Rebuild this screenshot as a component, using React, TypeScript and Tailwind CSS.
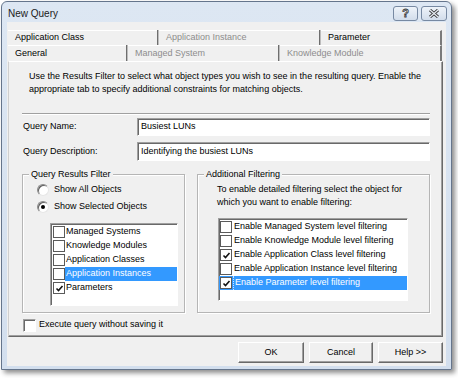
import React from 'react'

const font = { fontFamily: '"Liberation Sans", Arial, sans-serif' }

function ListCheck({ checked }: { checked?: boolean }) {
  return (
    <span className="flex h-[12px] w-[12px] shrink-0 items-center justify-center border border-[#5a5a5a] bg-white">
      {checked && (
        <svg width="9" height="9" viewBox="0 0 9 9">
          <path d="M1.5 4.5 L3.5 6.5 L7.5 2" stroke="#111" strokeWidth="1.6" fill="none" />
        </svg>
      )}
    </span>
  )
}

function Radio({ checked }: { checked?: boolean }) {
  return (
    <span className="flex h-[12px] w-[12px] items-center justify-center rounded-full border border-t-[#8a8a8a] border-l-[#8a8a8a] border-r-[#e6e6e6] border-b-[#e6e6e6] bg-white shadow-[inset_1px_1px_0_#5e5e5e]">
      {checked && <span className="h-[4px] w-[4px] rounded-full bg-black" />}
    </span>
  )
}

function Tab({ label, w, dim, last }: { label: string; w: string; dim?: boolean; last?: boolean }) {
  return (
    <div
      className={`${w} flex h-full items-center border-t border-white pl-[7px] ${
        last ? 'border-r-2 border-r-[#7a7a7a]' : ''
      } ${dim ? 'text-[#8d8d8d]' : 'text-black'}`}
    >
      {label}
    </div>
  )
}

function Sep() {
  return <div className="h-full w-[2px] shrink-0 border-l border-[#6e6e6e] bg-[#bdbdbd]" />
}

function Button({ label, w }: { label: string; w: string }) {
  return (
    <div className={`${w} flex h-[21px] items-center justify-center border border-t-white border-l-white border-r-[#696969] border-b-[#696969] bg-[#f0f0f0] shadow-[inset_-1px_-1px_0_#a0a0a0]`}>
      {label}
    </div>
  )
}

export default function App() {
  return (
    <div className="h-[378px] w-[458px] bg-white pl-[1px] pt-[1px] text-[9px] text-black" style={font}>
      <div className="flex h-[369px] w-[451px] flex-col rounded-t-[6px] border border-[#65758c] bg-gradient-to-b from-[#dde7f3] to-[#d3dfee] shadow-[3px_3px_5px_rgba(0,0,0,0.45)]">
        {/* title bar */}
        <div className="flex h-[20px] items-center justify-between pl-[6px] pr-[4px]">
          <span className="pt-[2px] text-[10px] text-[#1b1b1b]">New Query</span>
          <div className="flex gap-[3px] pt-[3px]">
            <div className="flex h-[15px] w-[25px] items-center justify-center rounded-[3px] border border-[#7789a2] bg-gradient-to-b from-[#eef3f9] to-[#d2ddeb]">
              <span className="text-[11px] font-bold text-transparent [-webkit-text-stroke:0.8px_#3a3a3a]">?</span>
            </div>
            <div className="flex h-[15px] w-[26px] items-center justify-center rounded-[3px] border border-[#7789a2] bg-gradient-to-b from-[#eef3f9] to-[#d2ddeb]">
              <svg width="12" height="9" viewBox="0 0 12 9">
                <path d="M2 1 L10 8 M10 1 L2 8" stroke="#3a3a3a" strokeWidth="3" />
                <path d="M2 1 L10 8 M10 1 L2 8" stroke="#e9eef5" strokeWidth="1.2" />
              </svg>
            </div>
          </div>
        </div>

        {/* client */}
        <div className="mx-[5px] flex h-[344px] flex-col bg-[#f0f0f0] pl-[1px] pt-[8px]">
          {/* tab rows */}
          <div className="flex h-[15px] w-[434px]">
            <Tab label="Application Class" w="w-[149px]" />
            <Sep />
            <Tab label="Application Instance" w="w-[160px]" dim />
            <Sep />
            <Tab label="Parameter" w="flex-1" last />
          </div>
          <div className="flex h-[16px] w-[434px]">
            <Tab label="General" w="w-[118px]" />
            <Sep />
            <Tab label="Managed System" w="w-[150px]" dim />
            <Sep />
            <Tab label="Knowledge Module" w="flex-1" dim last />
          </div>

          {/* panel */}
          <div className="flex h-[276px] w-[435px] flex-col border border-t-white border-l-[#cfcfcf] border-r-[#696969] border-b-[#696969] shadow-[inset_-1px_-1px_0_#a0a0a0]">
            <div className="pl-[20px] pt-[8px] leading-[13px]">
              <div>Use the Results Filter to select what object types you wish to see in the resulting query. Enable the</div>
              <div>appropriate tab to specify additional constraints for matching objects.</div>
            </div>
            <div className="ml-[13px] mt-[17px] h-[2px] w-[408px] border-t border-[#a0a0a0] bg-white" />

            <div className="ml-[14px] mt-[3px] flex h-[18px] w-[407px] items-center">
              <span className="w-[114px]">Query Name:</span>
              <div className="flex h-full flex-1 items-center border border-t-[#a0a0a0] border-l-[#a0a0a0] border-r-white border-b-white bg-white pl-[3px] shadow-[inset_1px_1px_0_#696969]">
                Busiest LUNs
              </div>
            </div>
            <div className="ml-[14px] mt-[6px] flex h-[19px] w-[407px] items-center">
              <span className="w-[114px]">Query Description:</span>
              <div className="flex h-full flex-1 items-center border border-t-[#a0a0a0] border-l-[#a0a0a0] border-r-white border-b-white bg-white pl-[3px] shadow-[inset_1px_1px_0_#696969]">
                Identifying the busiest LUNs
              </div>
            </div>

            {/* groups */}
            <div className="ml-[13px] mt-[13px] flex h-[139px] gap-[12px]">
              <div className="relative h-full w-[163px] border border-[#b5b5b5] shadow-[inset_1px_1px_0_white,1px_1px_0_white]">
                <span className="absolute -top-[7px] left-[6px] bg-[#f0f0f0] px-[2px] leading-[12px]">Query Results Filter</span>
                <div className="ml-[14px] mt-[8px] flex h-[14px] items-center gap-[5px]">
                  <Radio />
                  <span>Show All Objects</span>
                </div>
                <div className="ml-[14px] mt-[3px] flex h-[14px] items-center gap-[5px]">
                  <Radio checked />
                  <span>Show Selected Objects</span>
                </div>
                <div className="ml-[27px] mt-[9px] h-[83px] w-[128px] border border-t-[#a0a0a0] border-l-[#a0a0a0] border-r-white border-b-white bg-white pl-[2px] pt-[1px] shadow-[inset_1px_1px_0_#696969]">
                  {[
                    ['Managed Systems', false, false],
                    ['Knowledge Modules', false, false],
                    ['Application Classes', false, false],
                    ['Application Instances', false, true],
                    ['Parameters', true, false],
                  ].map(([t, c, s]) => (
                    <div key={t as string} className="flex h-[14px] items-center">
                      <ListCheck checked={c as boolean} />
                      <span className={`flex h-full flex-1 items-center pl-[1px] ${s ? 'bg-[#3399ff] text-white' : ''}`}>{t as string}</span>
                    </div>
                  ))}
                </div>
              </div>

              <div className="relative h-full w-[233px] border border-[#b5b5b5] shadow-[inset_1px_1px_0_white,1px_1px_0_white]">
                <span className="absolute -top-[7px] left-[6px] bg-[#f0f0f0] px-[2px] leading-[12px]">Additional Filtering</span>
                <div className="ml-[19px] mt-[8px] leading-[13px]">
                  <div>To enable detailed filtering select the object for</div>
                  <div>which you want to enable filtering:</div>
                </div>
                <div className="ml-[20px] mt-[9px] h-[83px] w-[190px] border border-t-[#a0a0a0] border-l-[#a0a0a0] border-r-white border-b-white bg-white pt-[1px] shadow-[inset_1px_1px_0_#696969]">
                  {[
                    ['Enable Managed System level filtering', false, false],
                    ['Enable Knowledge Module level filtering', false, false],
                    ['Enable Application Class level filtering', true, false],
                    ['Enable Application Instance level filtering', false, false],
                    ['Enable Parameter level filtering', true, true],
                  ].map(([t, c, s]) => (
                    <div key={t as string} className={`flex h-[14px] items-center pl-[1px] ${s ? 'bg-[#3399ff] text-white' : ''}`}>
                      <ListCheck checked={c as boolean} />
                      <span className={`ml-[1px] flex h-full flex-1 items-center pl-[1px] ${s ? 'border-l border-dotted border-[#cfe6ff]' : ''}`}>{t as string}</span>
                    </div>
                  ))}
                </div>
              </div>
            </div>

            <div className="ml-[14px] mt-[5px] flex h-[14px] items-center gap-[3px]">
              <span className="h-[13px] w-[13px] border border-t-[#a0a0a0] border-l-[#a0a0a0] border-r-white border-b-white bg-white shadow-[inset_1px_1px_0_#696969]" />
              <span>Execute query without saving it</span>
            </div>
          </div>

          {/* buttons */}
          <div className="mt-[5px] flex w-[435px] justify-end gap-[5px]">
            <Button label="OK" w="w-[66px]" />
            <Button label="Cancel" w="w-[64px]" />
            <Button label="Help >>" w="w-[65px]" />
          </div>
        </div>
      </div>
    </div>
  )
}
